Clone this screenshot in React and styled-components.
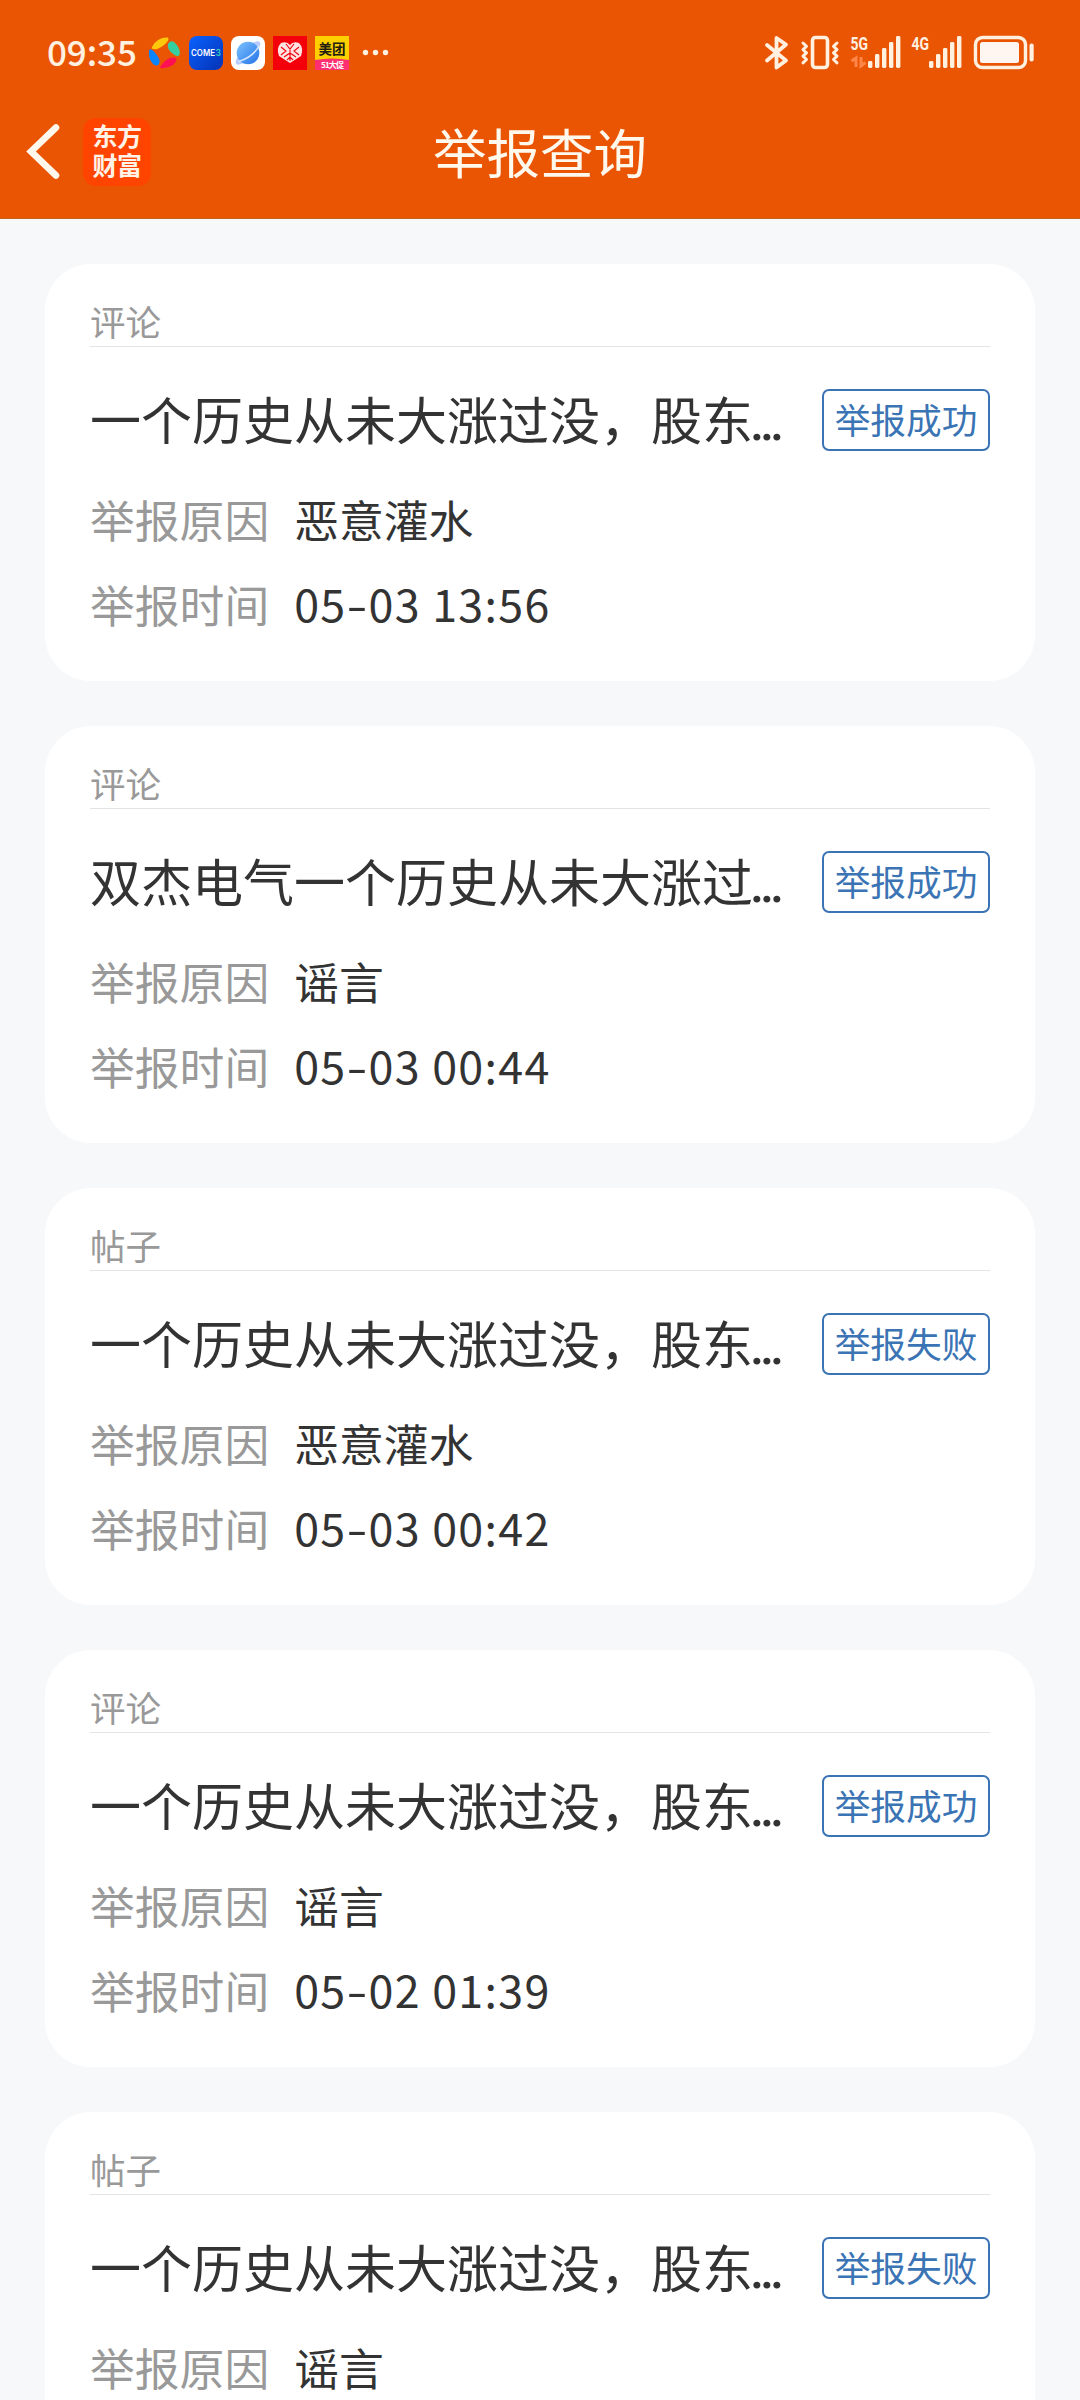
import React from "react";
import styled, { createGlobalStyle } from "styled-components";

const GlobalStyle = createGlobalStyle`
  * {
    box-sizing: border-box;
  }

  body {
    margin: 0;
    background: #f7f8fa;
    font-family: "Noto Sans CJK SC", sans-serif;
  }

  svg {
    overflow: visible;
  }
`;

const Page = styled.div`
  width: 1080px;
  height: 2400px;
  overflow: hidden;
  background: #f7f8fa;
`;

const Header = styled.header`
  height: 219px;
  background: #ea5504;
  border-bottom: 1px solid #c4611f;
`;

const StatusBar = styled.div`
  display: flex;
  align-items: center;
  justify-content: space-between;
  height: 105px;
  padding: 0 46px 0 47px;
  color: #fff0e0;
`;

const StatusGroup = styled.div`
  display: flex;
  align-items: center;
`;

const Clock = styled.div`
  width: 101px;
  padding-bottom: 3px;
  font-size: 35px;
  font-weight: 500;
  line-height: 36px;
  letter-spacing: -0.1px;
  white-space: nowrap;
`;

const NavBar = styled.div`
  display: grid;
  grid-template-columns: 151px 1fr 151px;
  align-items: center;
  height: 94px;
`;

const NavLeft = styled.div`
  display: flex;
  align-items: center;
  justify-content: space-between;
  padding-left: 26px;
`;

const NavTitle = styled.h1`
  margin: 0;
  padding-bottom: 3px;
  font-size: 53.5px;
  font-weight: 400;
  line-height: 80px;
  text-align: center;
  color: #fff8ec;
`;

const Logo = styled.div`
  display: flex;
  flex-direction: column;
  align-items: center;
  justify-content: center;
  width: 68px;
  height: 68px;
  padding-bottom: 5px;
  border-radius: 13px;
  background: #ff4400;
`;

const LogoText = styled.span`
  font-size: 25px;
  font-weight: 700;
  line-height: 29px;
  letter-spacing: -0.5px;
  color: #fff3e8;
`;

const List = styled.main`
  display: flex;
  flex-direction: column;
  gap: 45px;
  padding: 45px;
`;

const Card = styled.section`
  flex: none;
  height: 417px;
  padding: 36px 45px 0;
  border-radius: 46px;
  background: #fff;
`;

const Category = styled.div`
  height: 47px;
  border-bottom: 1px solid #e3e3e3;
  font-size: 35.5px;
  line-height: 41px;
  color: #999;
`;

const TitleRow = styled.div`
  display: flex;
  align-items: center;
  justify-content: space-between;
  height: 76px;
  margin-top: 35px;
`;

const CardTitle = styled.h2`
  width: 700px;
  margin: 0;
  overflow: hidden;
  font-size: 51px;
  font-weight: 400;
  line-height: 76px;
  white-space: nowrap;
  color: #333;
`;

const Ellipsis = styled.span`
  margin-left: -3px;
  font-family: Roboto, sans-serif;
  font-weight: 500;
  letter-spacing: -4.2px;
`;

const Badge = styled.span`
  width: 168px;
  height: 62px;
  border: 2px solid #3b74b4;
  border-radius: 7px;
  font-size: 35.7px;
  line-height: 56px;
  text-align: center;
  color: #3b74b4;
`;

const Field = styled.div`
  display: flex;
  gap: 25px;
  height: 85px;
  font-size: 44.8px;
  line-height: 85px;
  color: #333;
`;

const Fields = styled.div`
  margin-top: 18px;
`;

const FieldLabel = styled.span`
  color: #999;
`;

const FieldTime = styled.span`
  line-height: 83px;
  letter-spacing: 1.3px;
`;

const Dash = styled.span`
  display: inline-block;
  width: 22px;
  text-align: center;
  transform: scaleX(1.35);
`;

const reports = [
  { type: "评论", title: "一个历史从未大涨过没，股东", status: "举报成功", reason: "恶意灌水", date: ["05", "03 13:56"] },
  { type: "评论", title: "双杰电气一个历史从未大涨过", status: "举报成功", reason: "谣言", date: ["05", "03 00:44"] },
  { type: "帖子", title: "一个历史从未大涨过没，股东", status: "举报失败", reason: "恶意灌水", date: ["05", "03 00:42"] },
  { type: "评论", title: "一个历史从未大涨过没，股东", status: "举报成功", reason: "谣言", date: ["05", "02 01:39"] },
  { type: "帖子", title: "一个历史从未大涨过没，股东", status: "举报失败", reason: "谣言" },
];

// notification icons, origin at x=148 y=36
const AppIcons = () => (
  <svg width="242" height="34" viewBox="148 36 242 34">
    <defs>
      <linearGradient id="come" x1="0" y1="0" x2="1" y2="1">
        <stop offset="0" stopColor="#0b62ff" />
        <stop offset="1" stopColor="#0332b4" />
      </linearGradient>
      <linearGradient id="globe" x1="0" y1="0" x2="1" y2="1">
        <stop offset="0" stopColor="#7cc4ff" />
        <stop offset="1" stopColor="#2472e8" />
      </linearGradient>
    </defs>
    <path d="M152 47 Q157 37 168 37.5 Q170 40 164 45 Q158 50 154 49 Q151 49 152 47 Z" fill="#ffc80a" />
    <path d="M168 44 Q170 40 174 42 Q181 48 179.5 55 Q177 58 172 53 Q167 49 168 44 Z" fill="#35d0a0" />
    <path d="M149 50 Q152 48 156 54 Q161 60 159 64 Q157 67 153 64 Q148 59 149 50 Z" fill="#0a84ff" />
    <path d="M176 58 Q178 60 173 65 Q167 69 160 68 Q160 66 164 62 Q170 56 176 58 Z" fill="#ff1053" />

    <rect x="189" y="36" width="34" height="34" rx="8" fill="url(#come)" />
    <text x="191" y="56" fontSize="8.5" fontWeight="600" fontFamily="Inter, sans-serif" fill="#fff" textLength="24" lengthAdjust="spacingAndGlyphs">COME</text>
    <text x="215.5" y="56" fontSize="8.5" fontWeight="600" fontFamily="Inter, sans-serif" fill="#35d9b8">3</text>

    <rect x="231" y="36" width="34" height="34" rx="8" fill="#fff" />
    <ellipse cx="248" cy="53" rx="16" ry="5.5" transform="rotate(-43 248 53)" fill="#b8ccff" />
    <circle cx="248" cy="53" r="11.3" fill="url(#globe)" />
    <path d="M238.5 61.5 Q253 57 259 46" fill="none" stroke="#d6eaff" strokeWidth="1.5" />

    <rect x="273" y="36" width="34" height="34" fill="#f4000b" />
    <path d="M290 63 L279 56 Q276 48 281 43 Q287 41 290 45 Q293 41 299 43 Q304 48 301 56 Z" fill="#ffe4e1" />
    <path d="M281 47 l5 4 l-5 4 M299 47 l-5 4 l5 4 M286 44 l4 5 l4 -5 M290 50 v11 M284 57 l6 -4 l6 4 M287 60 l3 -3 l3 3" fill="none" stroke="#f4000b" strokeWidth="1.1" />

    <rect x="315" y="36" width="34" height="24" fill="#ffd000" />
    <path d="M315 60 Q332 57 349 60 V70 H315 Z" fill="#ff2f72" />
    <text x="318.5" y="54" fontSize="13.5" fontWeight="700" fill="#221d10">美团</text>
    <text x="321" y="67.5" fontSize="8" fontWeight="700" fill="#fff" textLength="23">51大促</text>

    <circle cx="365.5" cy="52.5" r="2.7" fill="#fff0e0" />
    <circle cx="375.5" cy="52.5" r="2.7" fill="#fff0e0" />
    <circle cx="385.5" cy="52.5" r="2.7" fill="#fff0e0" />
  </svg>
);

const Signal = ({ x }) => (
  <g fill="#fff0e0">
    {[7, 14, 20, 26, 32].map((h, i) => (
      <rect key={h} x={x + i * 7} y={68 - h} width="4.4" height={h} rx="1.4" />
    ))}
  </g>
);

// system icons, origin at x=764 y=36
const SystemIcons = () => (
  <svg width="270" height="34" viewBox="764 36 270 34">
    <g fill="none" stroke="#fff0e0" strokeLinecap="round" strokeLinejoin="round">
      <path d="M767 45 L786 60.5 L776.5 67.5 V38 L786 44.5 L767 60.5" strokeWidth="3.8" />
      <rect x="812.5" y="37.5" width="15" height="30" rx="3" strokeWidth="3.6" />
      <path d="M803 43 l3.5 3.3 l-3.5 3.3 l3.5 3.3 l-3.5 3.3 l3.5 3.3 l-3.5 3.3" strokeWidth="3" />
      <path d="M837 43 l-3.5 3.3 l3.5 3.3 l-3.5 3.3 l3.5 3.3 l-3.5 3.3 l3.5 3.3" strokeWidth="3" />
      <rect x="975.5" y="37.5" width="50" height="30" rx="7" strokeWidth="3.4" />
    </g>
    <g fill="#fff0e0" fontFamily="Roboto, sans-serif" fontSize="18.5" fontWeight="700">
      <text x="850.5" y="50.3" textLength="17.5" lengthAdjust="spacingAndGlyphs">5G</text>
      <text x="911.5" y="50.3" textLength="17.5" lengthAdjust="spacingAndGlyphs">4G</text>
    </g>
    <path d="M856 67 V58 L851.5 61 M861 57 V66 L865.5 62.5" fill="none" stroke="#ff8648" strokeWidth="3" />
    <Signal x={868} />
    <Signal x={929} />
    <rect x="980" y="42" width="39" height="21" rx="2.5" fill="#fff6f2" />
    <rect x="1029.5" y="43.5" width="4.2" height="18" rx="2" fill="#fff0e0" />
  </svg>
);

const BackIcon = () => (
  <svg width="34" height="56" viewBox="26 124 34 56">
    <path d="M56 127.5 L31 151.5 L56 175.5" fill="none" stroke="#fff8ec" strokeWidth="6.6" strokeLinecap="round" />
  </svg>
);

const ReportCard = ({ report }) => (
  <Card>
    <Category>{report.type}</Category>
    <TitleRow>
      <CardTitle>
        {report.title}
        <Ellipsis>...</Ellipsis>
      </CardTitle>
      <Badge>{report.status}</Badge>
    </TitleRow>
    <Fields>
      <Field>
        <FieldLabel>举报原因</FieldLabel>
        <span>{report.reason}</span>
      </Field>
      {report.date && (
        <Field>
          <FieldLabel>举报时间</FieldLabel>
          <FieldTime>
            {report.date[0]}
            <Dash>-</Dash>
            {report.date[1]}
          </FieldTime>
        </Field>
      )}
    </Fields>
  </Card>
);

const App = () => {
  return (
    <Page>
      <GlobalStyle />
      <Header>
        <StatusBar>
          <StatusGroup>
            <Clock>09:35</Clock>
            <AppIcons />
          </StatusGroup>
          <SystemIcons />
        </StatusBar>
        <NavBar>
          <NavLeft>
            <BackIcon />
            <Logo>
              <LogoText>东方</LogoText>
              <LogoText>财富</LogoText>
            </Logo>
          </NavLeft>
          <NavTitle>举报查询</NavTitle>
        </NavBar>
      </Header>
      <List>
        {reports.map((report, i) => (
          <ReportCard key={i} report={report} />
        ))}
      </List>
    </Page>
  );
};

export default App;
